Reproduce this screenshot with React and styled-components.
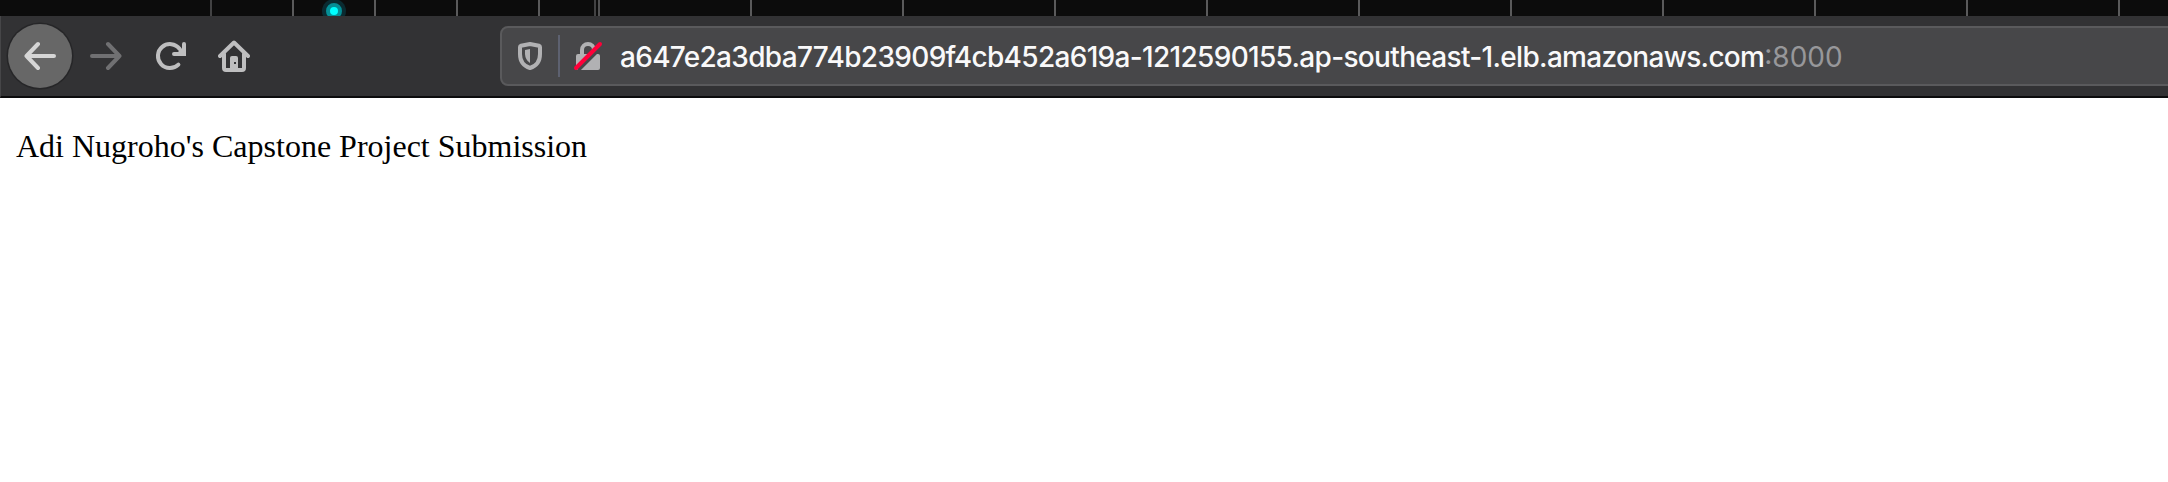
import React from "react";
import styled, { createGlobalStyle } from "styled-components";

const GlobalStyle = createGlobalStyle`
  body { margin: 0; background: #fff; overflow: hidden; }
`;

const Window = styled.div`
  height: 482px;
  display: flex;
  flex-direction: column;
  overflow: hidden;
  background: #fff;
`;

const TabStrip = styled.div`
  position: relative;
  height: 16px;
  flex: none;
  display: flex;
  overflow: hidden;
  background: #0c0c0c;
`;

const Tab = styled.div`
  box-sizing: border-box;
  flex: none;
  width: ${(p) => p.$width}px;
  height: 16px;
  border-right: 2px solid ${(p) => p.$line || "#5a5a5b"};
`;

const Indicator = styled.span`
  position: absolute;
  left: 326px;
  top: 3px;
  width: 16px;
  height: 16px;
  box-sizing: border-box;
  border-radius: 50%;
  background: #00ffff;
  border: 4px solid #058f96;
  box-shadow: 0 0 0 4px #0a2b31;
`;

const Toolbar = styled.nav`
  box-sizing: border-box;
  height: 82px;
  flex: none;
  display: flex;
  align-items: center;
  background: #323234;
  border-left: 1px solid #464648;
  border-bottom: 2px solid #0c0c0d;
  padding-left: 7px;
`;

const NavButton = styled.button`
  flex: none;
  display: grid;
  place-items: center;
  width: 64px;
  height: 64px;
  padding: 0;
  border: 0;
  border-radius: 50%;
  color: ${(p) => (p.disabled ? "#707072" : "#bebebf")};
  background: ${(p) => (p.$round ? "#676767" : "transparent")};
  box-shadow: ${(p) => (p.$round ? "0 0 0 1.5px #262628" : "none")};
  margin-right: ${(p) => p.$gap || 0}px;
`;

const Icon = styled.svg`
  display: block;
  flex: none;
  width: 32px;
  height: 32px;
`;

const AddressBar = styled.div`
  box-sizing: border-box;
  flex: none;
  width: 1680px;
  height: 60px;
  margin-left: 234px;
  padding-left: 12px;
  display: flex;
  align-items: center;
  background: #474749;
  border: 2px solid #5a5a5c;
  border-radius: 8px;
  color: #b1b1b3;
`;

const Separator = styled.span`
  width: 2px;
  height: 42px;
  margin: 0 12px;
  background: #5d6170;
`;

const Url = styled.div`
  margin-left: 16px;
  padding-top: 2px;
  display: flex;
  font: 400 28px/36px Inter, "Liberation Sans", sans-serif;
  white-space: pre;
`;

const Host = styled.span`
  color: #f9f9fa;
  font-weight: 550;
  letter-spacing: -0.68px;
`;

const Port = styled.span`
  color: #97979a;
`;

const Page = styled.main`
  padding: 30px 16px;
  color: #000;
  font: 32px/37px "Liberation Serif", "Times New Roman", serif;
`;

const stroke = {
  fill: "none",
  stroke: "currentColor",
  strokeWidth: 4,
  strokeLinecap: "round",
  strokeLinejoin: "round",
};

const BackIcon = () => (
  <Icon viewBox="0 0 32 32" color="#d6d6d6">
    <path {...stroke} d="M30 16H2.5M14 4 2.5 16 14 28" />
  </Icon>
);

const ForwardIcon = () => (
  <Icon viewBox="0 0 32 32">
    <path {...stroke} d="M2 16H29.5M18 4 29.5 16 18 28" />
  </Icon>
);

const ReloadIcon = () => (
  <Icon viewBox="0 0 32 32">
    <path {...stroke} d="M24.4 24.6A12 12 0 1 1 25.5 8.8" />
    <path
      d="M30 2a2 2 0 0 1 2 2v12H20a2 2 0 0 1 0-4h4l4-4V4a2 2 0 0 1 2-2z"
      fill="currentColor"
    />
  </Icon>
);

const HomeIcon = () => (
  <Icon viewBox="0 0 32 32">
    <path {...stroke} d="M2 16 16 2.5 30 16" />
    <path {...stroke} d="M6 14V28Q6 30 8 30H24Q26 30 26 28V14" />
    <path d="M12 18q0-2 2-2h4q2 0 2 2v12h-8z" fill="currentColor" />
    <rect x="16" y="22" width="2" height="2" fill="#323234" />
  </Icon>
);

const ShieldIcon = () => (
  <Icon viewBox="0 0 32 32">
    <path
      {...stroke}
      d="M16 4 25 5.7Q26 6 26 7V14C26 21 22.5 26 16 28C9.5 26 6 21 6 14V7Q6 6 7 5.7Z"
    />
    <path d="M16 9v14q-4.7-3-5-9v-4z" fill="currentColor" />
  </Icon>
);

const InsecureIcon = () => (
  <Icon viewBox="0 0 32 32">
    <path {...stroke} d="M10 15V10a6 6 0 0 1 12 0v5" />
    <rect x="4" y="14" width="24" height="16" rx="2" fill="currentColor" />
    <path d="M6 30 30 6" stroke="#474749" strokeWidth="4" />
    <path {...stroke} stroke="#ff0039" d="M4 28 28 4" />
  </Icon>
);

const tabs = [
  { width: 212, line: "#424243" },
  { width: 82 },
  { width: 82 },
  { width: 82 },
  { width: 82 },
  { width: 56, line: "#424243" },
  { width: 4, line: "#505051" },
  ...Array.from({ length: 10 }, () => ({ width: 152 })),
];

export default function App() {
  return (
    <Window>
      <GlobalStyle />
      <TabStrip>
        {tabs.map((tab, i) => (
          <Tab key={i} $width={tab.width} $line={tab.line} />
        ))}
        <Indicator />
      </TabStrip>
      <Toolbar>
        <NavButton $round $gap={2} aria-label="Back"><BackIcon /></NavButton>
        <NavButton disabled aria-label="Forward"><ForwardIcon /></NavButton>
        <NavButton aria-label="Reload"><ReloadIcon /></NavButton>
        <NavButton aria-label="Home"><HomeIcon /></NavButton>
        <AddressBar>
          <ShieldIcon />
          <Separator />
          <InsecureIcon />
          <Url>
            <Host>a647e2a3dba774b23909f4cb452a619a-1212590155.ap-southeast-1.elb.amazonaws.com</Host>
            <Port>:8000</Port>
          </Url>
        </AddressBar>
      </Toolbar>
      <Page>Adi Nugroho's Capstone Project Submission</Page>
    </Window>
  );
}
